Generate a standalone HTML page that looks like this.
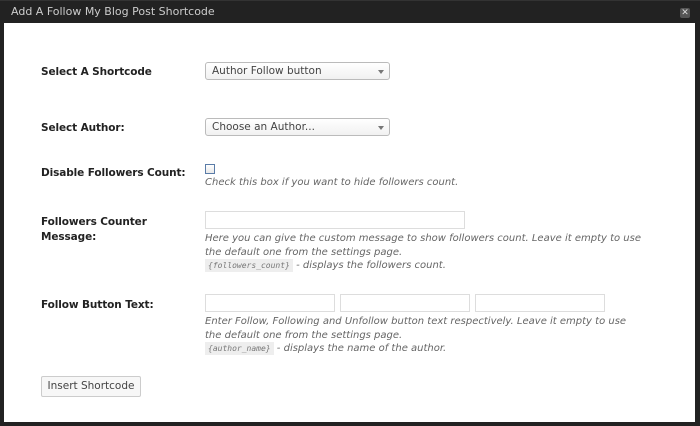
<!DOCTYPE html>
<html><head><style>
*{box-sizing:border-box;margin:0;padding:0}
body{width:700px;height:426px;background:#222;font-family:"DejaVu Sans","Liberation Sans",sans-serif;position:relative;overflow:hidden}
.title{position:absolute;left:0;top:0;width:700px;height:23px;background:#222;border-top:1px solid #333;color:#ccc;font-size:11px;line-height:22px;padding-left:11px}
.close{position:absolute;left:680px;top:8px;width:10px;height:10px;background:#555;color:#ddd;font-size:9px;line-height:10px;text-align:center;border-radius:2px}
.content{position:absolute;left:4px;top:23px;width:691px;height:399px;background:#fff}
.lbl{position:absolute;left:41px;font-size:10.5px;font-weight:bold;color:#222;line-height:15px;letter-spacing:-0.1px}
.sel{position:absolute;left:205px;width:185px;height:18px;border:1px solid #bbb;border-radius:3px;background:linear-gradient(#fff,#f1f1f1);font-size:10.5px;color:#444;line-height:16px;padding-left:6px}
.sel:after{content:"";position:absolute;right:5px;top:7px;border:3px solid transparent;border-top:4px solid #777}
.inp{position:absolute;height:18px;border:1px solid #ddd;background:#fff}
.desc{position:absolute;left:205px;font-size:10px;font-style:italic;color:#666;line-height:13.5px;width:440px}
code{font-family:"DejaVu Sans Mono",monospace;font-size:8px;background:#eee;color:#777;padding:2px 3px}
.btn{position:absolute;left:41px;top:376px;width:100px;height:21px;border:1px solid #ccc;border-radius:2px;background:#f7f7f7;font-size:10.5px;color:#444;line-height:19px;text-align:center}
</style></head><body>
<div class="title">Add A Follow My Blog Post Shortcode</div>
<div class="close">✕</div>
<div class="content"></div>
<div class="lbl" style="top:65px">Select A Shortcode</div>
<div class="sel" style="top:62px">Author Follow button</div>
<div class="lbl" style="top:121px">Select Author:</div>
<div class="sel" style="top:118px">Choose an Author...</div>
<div class="lbl" style="top:166px">Disable Followers Count:</div>
<div style="position:absolute;left:205px;top:164px;width:10px;height:10px;border:1px solid #5a7ca8;background:linear-gradient(#fff,#e8e8e8)"></div>
<div class="desc" style="top:176px">Check this box if you want to hide followers count.</div>
<div class="lbl" style="top:215px">Followers Counter<br>Message:</div>
<div class="inp" style="left:205px;top:211px;width:260px"></div>
<div class="desc" style="top:232px">Here you can give the custom message to show followers count. Leave it empty to use<br>the default one from the settings page.<br><code>{followers_count}</code> - displays the followers count.</div>
<div class="lbl" style="top:298px">Follow Button Text:</div>
<div class="inp" style="left:205px;top:294px;width:130px"></div>
<div class="inp" style="left:340px;top:294px;width:130px"></div>
<div class="inp" style="left:475px;top:294px;width:130px"></div>
<div class="desc" style="top:315px">Enter Follow, Following and Unfollow button text respectively. Leave it empty to use<br>the default one from the settings page.<br><code>{author_name}</code> - displays the name of the author.</div>
<div class="btn">Insert Shortcode</div>
</body></html>
